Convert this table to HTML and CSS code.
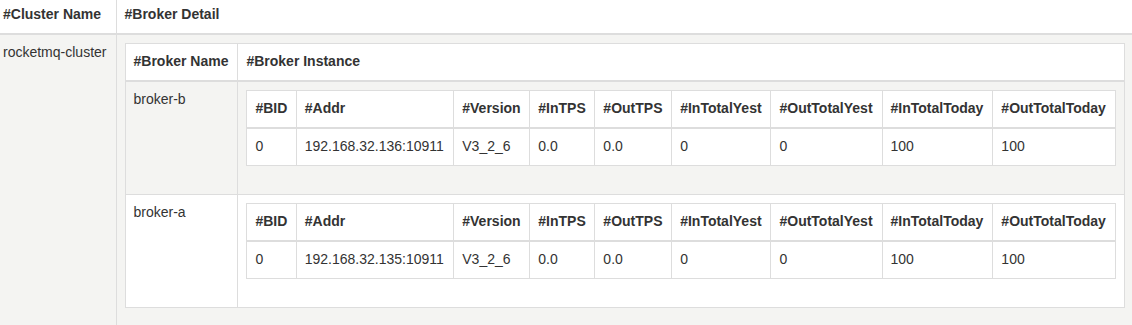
FILE: index.html
```html
<!DOCTYPE html>
<html lang="en">
<head>
    <meta charset="UTF-8">
    <title>Cluster</title>
    <link rel="stylesheet" href="styles.css">
</head>
<body>
    <table class="table table-striped cluster-table">
        <thead>
            <tr>
                <th class="nowrap">#Cluster Name</th>
                <th>#Broker Detail</th>
            </tr>
        </thead>
        <tbody>
            <tr>
                <td class="nowrap">rocketmq-cluster</td>
                <td>
                    <table class="table table-bordered table-striped">
                        <thead>
                            <tr>
                                <th class="nowrap">#Broker Name</th>
                                <th>#Broker Instance</th>
                            </tr>
                        </thead>
                        <tbody>
                            <tr>
                                <td>broker-b</td>
                                <td>
                                    <table class="table table-bordered">
                                        <thead>
                                            <tr>
                                                <th>#BID</th>
                                                <th>#Addr</th>
                                                <th>#Version</th>
                                                <th>#InTPS</th>
                                                <th>#OutTPS</th>
                                                <th>#InTotalYest</th>
                                                <th>#OutTotalYest</th>
                                                <th>#InTotalToday</th>
                                                <th>#OutTotalToday</th>
                                            </tr>
                                        </thead>
                                        <tbody>
                                            <tr>
                                                <td>0</td>
                                                <td>192.168.32.136:10911</td>
                                                <td>V3_2_6</td>
                                                <td>0.0</td>
                                                <td>0.0</td>
                                                <td>0</td>
                                                <td>0</td>
                                                <td>100</td>
                                                <td>100</td>
                                            </tr>
                                        </tbody>
                                    </table>
                                </td>
                            </tr>
                            <tr>
                                <td>broker-a</td>
                                <td>
                                    <table class="table table-bordered">
                                        <thead>
                                            <tr>
                                                <th>#BID</th>
                                                <th>#Addr</th>
                                                <th>#Version</th>
                                                <th>#InTPS</th>
                                                <th>#OutTPS</th>
                                                <th>#InTotalYest</th>
                                                <th>#OutTotalYest</th>
                                                <th>#InTotalToday</th>
                                                <th>#OutTotalToday</th>
                                            </tr>
                                        </thead>
                                        <tbody>
                                            <tr>
                                                <td>0</td>
                                                <td>192.168.32.135:10911</td>
                                                <td>V3_2_6</td>
                                                <td>0.0</td>
                                                <td>0.0</td>
                                                <td>0</td>
                                                <td>0</td>
                                                <td>100</td>
                                                <td>100</td>
                                            </tr>
                                        </tbody>
                                    </table>
                                </td>
                            </tr>
                        </tbody>
                    </table>
                </td>
            </tr>
        </tbody>
    </table>
</body>
</html>
```

FILE: styles.css
```css
body {
    font-family: "Liberation Sans", Arial, sans-serif;
    font-size: 14px;
    line-height: 1.42857;
    color: #333;
    background: #fff;
    margin: -3px 0 0 -5px;
    overflow: hidden;
}
.table {
    width: 100%;
    border-collapse: collapse;
    border-spacing: 0;
    margin-bottom: 20px;
    background: transparent;
}
.cluster-table {
    width: calc(100% + 1px);
}
.table th,
.table td {
    padding: 8px;
    text-align: left;
    vertical-align: top;
    border-top: 1px solid #ddd;
}
.table th {
    font-weight: bold;
    vertical-align: bottom;
    border-bottom: 2px solid #ddd;
}
.table thead tr:first-child th {
    border-top: 0;
}
.table .table {
    background: #fff;
}
.table-striped > tbody > tr:nth-of-type(odd) {
    background: #f4f4f2;
}
.table-bordered {
    border: 1px solid #ddd;
}
.table-bordered th,
.table-bordered td {
    border: 1px solid #ddd;
}
.table-bordered th {
    border-bottom-width: 2px;
}
.cluster-table > thead > tr > th,
.cluster-table > tbody > tr > td {
    border-left: 1px solid #ddd;
}
.cluster-table > thead > tr > th:first-child,
.cluster-table > tbody > tr > td:first-child {
    border-left: 0;
}
.nowrap {
    white-space: nowrap;
}
```
